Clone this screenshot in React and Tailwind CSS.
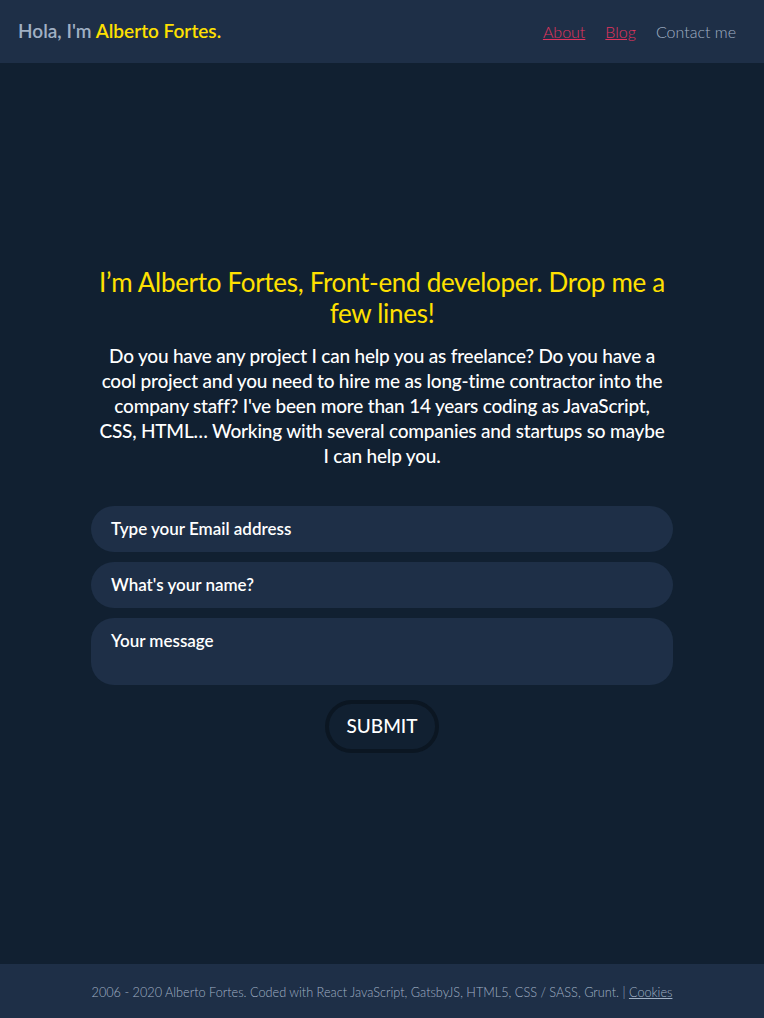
export default function App() {
  const font = { fontFamily: 'Lato, "Noto Sans", sans-serif' };
  return (
    <div className="min-h-[1018px] flex flex-col bg-[#112031]" style={font}>
      <header className="h-[63px] bg-[#1e2f47] flex items-center justify-between pl-[18px] pr-[28px]">
        <div className="text-[19px] font-semibold text-[#a0b0c4]">
          Hola, I'm <span className="text-[#ffe000]">Alberto Fortes.</span>
        </div>
        <nav className="flex items-center gap-[20px] text-[16px] font-light">
          <a className="text-[#e0345e] underline">About</a>
          <a className="text-[#e0345e] underline">Blog</a>
          <a className="text-[#a0b0c4]">Contact me</a>
        </nav>
      </header>
      <main className="flex-1 flex flex-col items-center justify-center pb-[8px]">
        <div className="w-[582px] flex flex-col items-center">
          <h1 className="text-[26px] leading-[31px] tracking-[-0.3px] text-[#ffe000] text-center">
            I’m Alberto Fortes, Front-end developer. Drop me a few lines!
          </h1>
          <p className="mt-[14px] text-[19px] leading-[25px] tracking-[-0.2px] font-medium text-white text-center">
            Do you have any project I can help you as freelance? Do you have a<br />
            cool project and you need to hire me as long-time contractor into the<br />
            company staff? I've been more than 14 years coding as JavaScript,<br />
            CSS, HTML… Working with several companies and startups so maybe<br />
            I can help you.
          </p>
          <form className="w-full mt-[38px] flex flex-col gap-[10px]">
            <div className="h-[46px] rounded-[23px] bg-[#1e2f47] flex items-center px-[20px] text-[17px] font-semibold text-white">
              Type your Email address
            </div>
            <div className="h-[46px] rounded-[23px] bg-[#1e2f47] flex items-center px-[20px] text-[17px] font-semibold text-white">
              What's your name?
            </div>
            <div className="h-[67px] rounded-[23px] bg-[#1e2f47] px-[20px] pt-[10px] text-[17px] font-semibold text-white">
              Your message
            </div>
            <div className="flex justify-center mt-[5px]">
              <button type="button" className="w-[114px] h-[53px] rounded-full border-[4px] border-[#0b1622] text-white text-[19px] font-medium">
                SUBMIT
              </button>
            </div>
          </form>
        </div>
      </main>
      <footer className="h-[54px] bg-[#1e2f47] flex items-center justify-center pt-[3px] text-[12.7px] font-light text-[#a0b0c4]">
        <span>
          2006 - 2020 Alberto Fortes. Coded with React JavaScript, GatsbyJS, HTML5, CSS / SASS, Grunt. | <a className="underline">Cookies</a>
        </span>
      </footer>
    </div>
  );
}
